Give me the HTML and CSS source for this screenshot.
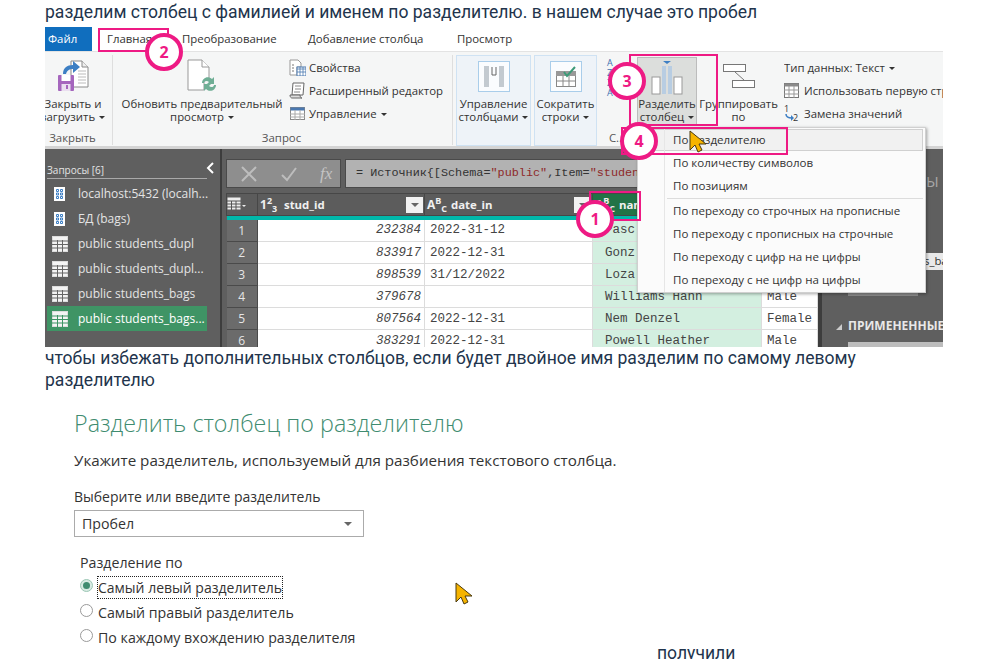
FILE: index.html
```html
<!DOCTYPE html>
<html lang="ru">
<head>
<meta charset="utf-8">
<meta name="viewport" content="width=device-width, initial-scale=1">
<title>Разделить столбец</title>
<link rel="stylesheet" href="styles.css">
</head>
<body>
<div class="page">

<p class="line first">разделим столбец с фамилией и именем по разделителю. в нашем случае это пробел</p>

<div class="shot">
  <div class="tabs">
    <div class="tab-file">Файл</div>
    <div class="tab t1">Главная</div>
    <div class="tab t2">Преобразование</div>
    <div class="tab t3">Добавление столбца</div>
    <div class="tab t4">Просмотр</div>
  </div>

  <div class="ribbon">
    <div class="group g-close">
      <div class="g-body">
        <div class="big">
          <div class="ico">
            <svg width="31" height="32" viewBox="0 0 31 32"><path d="M13 1h11l6 6v20H13z" fill="#fff" stroke="#8a8a8a"/><path d="M24 1v6h6" fill="#eee" stroke="#8a8a8a"/><path d="M20 11h8M20 14h8M20 17h8M20 20h8M20 23h8" stroke="#bbb"/><path d="M5 14c0-6 4-9 10-9V1l7 6-7 6V9c-3 0-6 1-7 5z" fill="#3d7fc4"/><rect x="0" y="15" width="16" height="16" rx="1" fill="#a566bd"/><rect x="3.500" y="15" width="9" height="6" fill="#fff"/><rect x="3.500" y="24" width="9" height="7" fill="#eadff0"/><rect x="8" y="25" width="2" height="4" fill="#a566bd"/></svg>
          </div>
          <div class="lbl">Закрыть и<br>загрузить <span class="caret"></span></div>
        </div>
      </div>
      <div class="g-label">Закрыть</div>
    </div>

    <div class="group g-query">
      <div class="g-body">
        <div class="big refresh">
          <div class="ico">
            <svg width="30" height="34" viewBox="0 0 30 34"><path d="M1 1h14l7 7v13h-5v10H1z" fill="#fff" stroke="#999"/><path d="M15 1v7h7" fill="#fff" stroke="#999"/><path d="M15 24c0-5 6-8 10-4l2-2v7h-7l2-2c-2-2-5-1-5 1zM29 26c0 5-6 8-10 4l-2 2v-7h7l-2 2c2 2 5 1 5-1z" fill="#6fae95"/></svg>
          </div>
          <div class="lbl">Обновить предварительный<br>просмотр <span class="caret"></span></div>
        </div>
        <div class="small-list query-list">
          <div class="small"><svg width="17" height="17" viewBox="0 0 17 17"><path d="M1 1h8l3 3v4H8v8H1z" fill="#fff" stroke="#999"/><path d="M3 6h2M3 9h2M3 12h2" stroke="#777"/><rect x="8" y="8" width="9" height="9" fill="#fff" stroke="#4a78b0"/><path d="M8 10h9M8 13h9M11 8v9M14 8v9" stroke="#4a78b0" stroke-width=".8"/></svg><span>Свойства</span></div>
          <div class="small"><svg width="17" height="17" viewBox="0 0 17 17"><path d="M4 1h11l-1 12H3z" fill="#fff" stroke="#666"/><path d="M6 4h6M6 7h6M5 10h6" stroke="#888"/><path d="M1 13h10c0 2 1 3 2 3H3c-1 0-2-1-2-3z" fill="#ddd" stroke="#666"/></svg><span>Расширенный редактор</span></div>
          <div class="small"><svg width="17" height="17" viewBox="0 0 17 17"><rect x="1.500" y="2.500" width="14" height="12" fill="#fff" stroke="#888"/><rect x="1.500" y="2.500" width="14" height="3" fill="#4a78b0"/><path d="M1 9h15M1 12h15M6 5v10M11 5v10" stroke="#aaa"/></svg><span>Управление <span class="caret"></span></span></div>
        </div>
      </div>
      <div class="g-label">Запрос</div>
    </div>

    <div class="blue b1">
      <div class="ico"><div class="ico-box"><svg width="24" height="24" viewBox="0 0 24 24"><rect x="2" y="1" width="5" height="21" fill="#c3cad0"/><rect x="17" y="1" width="5" height="21" fill="#c3cad0"/><path d="M10 2v8h4V2" fill="none" stroke="#666"/></svg></div></div>
      <div class="lbl">Управление<br>столбцами <span class="caret"></span></div>
    </div>
    <div class="blue b2">
      <div class="ico"><div class="ico-box"><svg width="24" height="24" viewBox="0 0 24 24"><rect x="2.500" y="6.500" width="19" height="15" fill="#fff" stroke="#888"/><rect x="2" y="6" width="20" height="5" fill="#999"/><path d="M2 16h20M9 11v11M15 11v11" stroke="#888"/><path d="M10 7l3 4 8-9" fill="none" stroke="#3c9a78" stroke-width="2"/></svg></div></div>
      <div class="lbl">Сократить<br>строки <span class="caret"></span></div>
    </div>

    <div class="group g-sort">
      <div class="g-body"><div class="az">A<br>Z<br>Z<br>A</div></div>
      <div class="g-label">С...</div>
    </div>

    <div class="big split">
      <div class="ico">
        <svg width="32" height="34" viewBox="0 0 32 34"><path d="M12 0h8l-4 3z" fill="#3d7fc4"/><rect x="1" y="16" width="8" height="17" fill="#fff" stroke="#999"/><rect x="23" y="16" width="8" height="17" fill="#fff" stroke="#999"/><rect x="11" y="5" width="4" height="28" fill="#b8cde2"/><rect x="17" y="5" width="4" height="28" fill="#b8cde2"/></svg>
      </div>
      <div class="lbl">Разделить<br>столбец <span class="caret"></span></div>
    </div>

    <div class="big groupby">
      <div class="ico">
        <svg width="32" height="24" viewBox="0 0 32 24"><rect x=".5" y=".5" width="22" height="7" fill="#fff" stroke="#777"/><rect x="9.500" y="16.500" width="22" height="7" fill="#fff" stroke="#777"/><path d="M12 8l9 8" stroke="#777"/></svg>
      </div>
      <div class="lbl">Группировать<br>по</div>
    </div>

    <div class="small-list transform">
      <div class="small"><span>Тип данных: Текст <span class="caret"></span></span></div>
      <div class="small"><svg width="15" height="15" viewBox="0 0 15 15"><rect x=".5" y=".5" width="14" height="14" fill="#fff" stroke="#777"/><rect x=".5" y=".5" width="14" height="3" fill="#8b8b8b"/><path d="M0 7h15M0 11h15M5 3v12M10 3v12" stroke="#999"/></svg><span>Использовать первую строку</span></div>
      <div class="small"><svg width="15" height="17" viewBox="0 0 15 17"><text x="0" y="7" font-size="9" fill="#333">1</text><text x="9" y="16" font-size="9" fill="#333">2</text><path d="M2 9c0 3 2 4 6 4" fill="none" stroke="#3d7fc4" stroke-width="1.500"/><path d="M7 10l3 3-3 3z" fill="#3d7fc4"/></svg><span>Замена значений</span></div>
    </div>
  </div>

  <div class="editor">
    <div class="queries">
      <div class="q-head"><span>Запросы [6]</span><svg width="9" height="12" viewBox="0 0 9 12"><path d="M7 1L2 6l5 5" fill="none" stroke="#fff" stroke-width="2"/></svg></div>
      <div class="q-item"><svg class="q-ico" width="16" height="16" viewBox="0 0 16 16"><rect x="2" y="1" width="11" height="14" fill="#fff"/><path d="M4.500 3.500h2v2h-2zM8.500 3.500h2v2h-2zM4.500 7h2v2h-2zM8.500 7h2v2h-2zM4.500 10.500h2v2h-2zM8.500 10.500h2v2h-2z" fill="none" stroke="#3d7fc4"/></svg>localhost:5432 (localh...</div>
      <div class="q-item"><svg class="q-ico" width="16" height="16" viewBox="0 0 16 16"><rect x="2" y="1" width="11" height="14" fill="#fff"/><path d="M4.500 3.500h2v2h-2zM8.500 3.500h2v2h-2zM4.500 7h2v2h-2zM8.500 7h2v2h-2zM4.500 10.500h2v2h-2zM8.500 10.500h2v2h-2z" fill="none" stroke="#3d7fc4"/></svg>БД (bags)</div>
      <div class="q-item"><svg class="q-ico" width="16" height="16" viewBox="0 0 16 16"><rect x=".5" y=".5" width="15" height="15" fill="#f4f4f4" stroke="#ddd"/><path d="M0 5h16M0 8.500h16M0 12h16M5.500 4v12M10.500 4v12" stroke="#666"/></svg>public students_dupl</div>
      <div class="q-item"><svg class="q-ico" width="16" height="16" viewBox="0 0 16 16"><rect x=".5" y=".5" width="15" height="15" fill="#f4f4f4" stroke="#ddd"/><path d="M0 5h16M0 8.500h16M0 12h16M5.500 4v12M10.500 4v12" stroke="#666"/></svg>public students_dupl...</div>
      <div class="q-item"><svg class="q-ico" width="16" height="16" viewBox="0 0 16 16"><rect x=".5" y=".5" width="15" height="15" fill="#f4f4f4" stroke="#ddd"/><path d="M0 5h16M0 8.500h16M0 12h16M5.500 4v12M10.500 4v12" stroke="#666"/></svg>public students_bags</div>
      <div class="q-item selected"><svg class="q-ico" width="16" height="16" viewBox="0 0 16 16"><rect x=".5" y=".5" width="15" height="15" fill="#f4f4f4" stroke="#ddd"/><path d="M0 5h16M0 8.500h16M0 12h16M5.500 4v12M10.500 4v12" stroke="#3f9465"/></svg>public students_bags...</div>
    </div>

    <div class="main">
      <div class="formula">
        <div class="f-btns">
          <svg width="18" height="18" viewBox="0 0 18 18"><path d="M2 2l14 14M16 2L2 16" stroke="#bdbdbd" stroke-width="2"/></svg>
          <svg width="18" height="18" viewBox="0 0 18 18"><path d="M2 10l5 5L16 3" fill="none" stroke="#bdbdbd" stroke-width="2"/></svg>
          <span class="fx">fx</span>
        </div>
        <div class="f-text">= Источник{[Schema=<span class="str">"public"</span>,Item=<span class="str">"student</span></div>
      </div>

      <table class="grid">
        <colgroup><col class="c0"><col class="c1"><col class="c2"><col class="c3"><col class="c4"></colgroup>
        <thead>
          <tr>
            <th><svg width="19" height="13" viewBox="0 0 19 13"><rect x=".5" y=".5" width="13" height="12" fill="#eee"/><path d="M0 4h14M0 7h14M0 10h14M4.500 4v9M9 4v9" stroke="#555"/><path d="M15 8h4l-2 2z" fill="#eee"/></svg></th>
            <th><div class="h"><span class="type">1<sup>2</sup><sub>3</sub></span><span class="col">stud_id</span><span class="filter"></span></div></th>
            <th><div class="h"><span class="type">A<sup>B</sup><sub>C</sub></span><span class="col">date_in</span><span class="filter"></span></div></th>
            <th class="sel"><div class="h"><span class="type">A<sup>B</sup><sub>C</sub></span><span class="col">nam</span></div></th>
            <th></th>
          </tr>
          <tr class="teal"><th colspan="5"></th></tr>
        </thead>
        <tbody>
          <tr><td class="n">1</td><td class="id">232384</td><td>2022-31-12</td><td class="nm">Pasc</td><td></td></tr>
          <tr><td class="n">2</td><td class="id">833917</td><td>2022-12-31</td><td class="nm">Gonz</td><td></td></tr>
          <tr><td class="n">3</td><td class="id">898539</td><td>31/12/2022</td><td class="nm">Loza</td><td></td></tr>
          <tr><td class="n">4</td><td class="id">379678</td><td></td><td class="nm">Williams Hann</td><td>Male</td></tr>
          <tr><td class="n">5</td><td class="id">807564</td><td>2022-12-31</td><td class="nm">Nem Denzel</td><td>Female</td></tr>
          <tr><td class="n">6</td><td class="id">383291</td><td>2022-12-31</td><td class="nm">Powell Heather</td><td>Male</td></tr>
        </tbody>
      </table>
    </div>

    <div class="settings">
      <div class="s-title">ПАРАМЕТРЫ</div>
      <div class="s-input">public students_bags</div>
      <div class="s-link"></div>
      <div class="s-steps"><span class="tri"></span>ПРИМЕНЕННЫЕ ШАГИ</div>
      <div class="s-step"></div>
    </div>
  </div>

  <div class="menu">
    <div class="m-item active">По разделителю</div>
    <div class="m-item">По количеству символов</div>
    <div class="m-item">По позициям</div>
    <div class="m-sep"></div>
    <div class="m-item">По переходу со строчных на прописные</div>
    <div class="m-item">По переходу с прописных на строчные</div>
    <div class="m-item">По переходу с цифр на не цифры</div>
    <div class="m-item">По переходу с не цифр на цифры</div>
  </div>

  <div class="mark box-2"></div>
  <div class="mark box-3"></div>
  <div class="mark box-4"></div>
  <div class="mark box-1"></div>
  <div class="circle c-2">2</div>
  <div class="circle c-3">3</div>
  <div class="circle c-4">4</div>
  <div class="circle c-1">1</div>
  <svg class="cursor cur-menu" width="19" height="24" viewBox="0 0 19 24"><path d="M1 1v19l5-5 3 7 4-2-3-6h7z" fill="#f6b400" stroke="#4a3a10"/></svg>
</div>

<p class="line">чтобы избежать дополнительных столбцов, если будет двойное имя разделим по самому левому разделителю</p>

<div class="dialog">
  <div class="d-title">Разделить столбец по разделителю</div>
  <div class="d-sub">Укажите разделитель, используемый для разбиения текстового столбца.</div>
  <div class="d-label">Выберите или введите разделитель</div>
  <div class="d-select"><span>Пробел</span><span class="d-arrow"></span></div>
  <div class="d-group">
    <div class="d-legend">Разделение по</div>
    <div class="radio on"><span class="dot"></span><span class="focus">Самый левый разделитель</span></div>
    <div class="radio"><span class="dot"></span><span>Самый правый разделитель</span></div>
    <div class="radio"><span class="dot"></span><span>По каждому вхождению разделителя</span></div>
  </div>
  <svg class="cursor cur-dialog" width="19" height="24" viewBox="0 0 19 24"><path d="M1 1v19l5-5 3 7 4-2-3-6h7z" fill="#f6b400" stroke="#4a3a10"/></svg>
</div>

<p class="line result">получили</p>

</div>
</body>
</html>
```

FILE: styles.css
```css
html, body {
  margin: 0;
  padding: 0;
  background: #fff;
}

.page {
  height: 659px;
  overflow: hidden;
  padding-left: 45px;
  box-sizing: border-box;
  font-family: Roboto, sans-serif;
}

.line {
  margin: 0;
  width: 860px;
  font-size: 17.55px;
  line-height: 22px;
  color: #22344c;
}

.first {
  padding-top: 1px;
  margin-bottom: 4px;
}

/* screenshot of power query */
.shot {
  position: relative;
  width: 898px;
  height: 320px;
  overflow: hidden;
  font-family: "Open Sans", "Noto Sans", sans-serif;
  font-size: 11.4px;
  color: #333;
}

.tabs {
  display: flex;
  height: 25px;
  line-height: 24px;
  background: #fff;
  box-sizing: border-box;
  border-bottom: 1px solid #e3e3e3;
}

.tab-file {
  width: 47px;
  height: 24px;
  background: #106ebe;
  color: #fff;
  padding-left: 3px;
  box-sizing: border-box;
}

.t1 { margin-left: 15px; width: 75px; }
.t2 { width: 126px; }
.t3 { width: 149px; }

.ribbon {
  display: flex;
  height: 97px;
  box-sizing: border-box;
  padding-top: 3px;
  background: #f5f6f6;
  border-bottom: 3px solid #d4d4d4;
}

.group {
  display: flex;
  flex-direction: column;
  height: 90px;
}

.g-body {
  display: flex;
  height: 76px;
}

.g-label {
  height: 14px;
  line-height: 14px;
  text-align: center;
  color: #555;
}

.g-close {
  width: 68px;
  border-right: 1px solid #dedede;
  box-sizing: border-box;
}

.g-close .big { width: 56px; }
.g-close .g-label { padding-right: 12px; }

.g-query {
  width: 340px;
  border-right: 1px solid #dedede;
  box-sizing: border-box;
}

.g-query .g-label { padding-right: 2px; }

.big {
  display: flex;
  flex-direction: column;
  align-items: center;
  height: 70px;
  white-space: nowrap;
}

.ico {
  height: 42px;
  display: flex;
  align-items: center;
  justify-content: center;
  flex-shrink: 0;
}

.lbl {
  line-height: 13px;
  text-align: center;
  white-space: nowrap;
}

.refresh { width: 178px; }

.caret {
  display: inline-block;
  width: 0;
  height: 0;
  margin-left: 1px;
  vertical-align: 2px;
  border-left: 3px solid transparent;
  border-right: 3px solid transparent;
  border-top: 3px solid #333;
}

.small-list {
  display: flex;
  flex-direction: column;
  gap: 6px;
  padding-top: 4px;
}

.query-list { margin-left: -2px; }

.small {
  display: flex;
  align-items: center;
  gap: 3px;
  height: 17px;
  white-space: nowrap;
}

.small svg { flex-shrink: 0; }

.blue {
  display: flex;
  flex-direction: column;
  align-items: center;
  height: 91px;
  margin-left: 3px;
  box-sizing: border-box;
  background: #eef3f8;
  border: 1px solid #cfe2f3;
}

.blue .ico { height: 41px; }

.b1 { width: 75px; }
.b2 { width: 63px; }

.ico-box {
  display: flex;
  align-items: center;
  justify-content: center;
  width: 32px;
  height: 31px;
  box-sizing: border-box;
  background: #fafcfe;
  border: 1px solid #a9cdea;
}

.g-sort { width: 40px; }

.az {
  margin: 3px 0 0 10px;
  font-size: 9px;
  line-height: 10px;
  color: #3d6fb0;
}

.split {
  width: 60px;
  height: 69px;
  margin-top: 2px;
  box-sizing: border-box;
  background: #dcdedc;
  border: 1px solid #bcbcbc;
}

.split .ico { height: 38px; margin-top: 1px; }

.groupby {
  width: 83px;
  height: 70px;
}

.transform {
  margin-left: 4px;
  width: 159px;
  overflow: hidden;
}

.transform .small { gap: 5px; }

/* dark editor part */
.editor {
  display: flex;
  height: 198px;
  background: #5f5f5f;
}

.queries {
  width: 177px;
  flex-shrink: 0;
  box-sizing: border-box;
  padding: 12px 0 0 2px;
  border-right: 2px solid #3d3d3d;
  color: #e4e4e4;
}

.q-head {
  display: flex;
  justify-content: space-between;
  align-items: flex-start;
  width: 160px;
  height: 18px;
  line-height: 19px;
  font-size: 10px;
  box-sizing: border-box;
  border-bottom: 1px solid #a9a9a9;
  margin-bottom: 2px;
}

.q-head svg { margin-top: 1px; transform: translateX(8px); }

.q-item {
  display: flex;
  align-items: center;
  gap: 10px;
  width: 160px;
  height: 25px;
  box-sizing: border-box;
  padding-left: 5px;
  font-size: 12px;
  white-space: nowrap;
}

.q-ico { flex-shrink: 0; }

.selected { background: #3f9465; color: #fff; }

.main {
  width: 596px;
  flex-shrink: 0;
  box-sizing: border-box;
  padding: 10px 0 0 4px;
  overflow: hidden;
}

.formula {
  display: flex;
  gap: 4px;
  height: 29px;
  margin-bottom: 5px;
}

.f-btns {
  display: flex;
  align-items: center;
  gap: 22px;
  width: 115px;
  box-sizing: border-box;
  padding-left: 13px;
  background: #8e8e8e;
  border: 1px solid #4a4a4a;
}

.fx {
  font-family: "Liberation Serif", serif;
  font-style: italic;
  font-size: 17px;
  color: #c4c4c4;
}

.f-text {
  flex: 1;
  box-sizing: border-box;
  padding-left: 10px;
  line-height: 27px;
  background: #b2b2b2;
  border: 1px solid #4a4a4a;
  font-family: "Liberation Mono", monospace;
  font-size: 11.8px;
  color: #333;
  white-space: nowrap;
  overflow: hidden;
}

.str { color: #8e2a2a; }

.grid {
  width: 591px;
  table-layout: fixed;
  border-collapse: collapse;
  font-family: "Liberation Mono", monospace;
  font-size: 12.5px;
  color: #444;
}

.c0 { width: 31px; }
.c1 { width: 167px; }
.c2 { width: 168px; }
.c3 { width: 169px; }
.c4 { width: 56px; }

.grid th {
  height: 22px;
  padding: 0;
  background: #5c5c5c;
  border: 1px solid #474747;
  color: #f0f0f0;
  font-family: "Open Sans", sans-serif;
  font-size: 11.4px;
  text-align: left;
  box-sizing: border-box;
}

.grid th.sel { background: #217346; }

.grid .teal th {
  height: 4px;
  background: #01b8aa;
  border: none;
}

.h {
  display: flex;
  align-items: center;
  height: 21px;
  padding: 0 1px 0 2px;
}

.type {
  font-size: 12px;
  width: 24px;
  flex-shrink: 0;
}

.type sup, .type sub {
  font-size: 9px;
  line-height: 0;
}

.col { flex: 1; font-weight: 700; }

.filter {
  position: relative;
  width: 17px;
  height: 16px;
  background: #f2f2f2;
}

.filter::after {
  content: "";
  position: absolute;
  left: 5px;
  top: 6px;
  border-left: 4px solid transparent;
  border-right: 4px solid transparent;
  border-top: 4px solid #666;
}

.grid td {
  height: 22px;
  padding: 0 5px;
  background: #fff;
  border-right: 1px solid #dcdcdc;
  border-bottom: 1px solid #dcdcdc;
  box-sizing: border-box;
  white-space: nowrap;
  overflow: hidden;
}

.grid td.n {
  background: #6b6b6b;
  border-color: #4a4a4a;
  text-align: center;
  font-family: "Open Sans", sans-serif;
  font-size: 12px;
  color: #e6e6e6;
}

.grid td.id {
  padding-right: 3px;
  text-align: right;
  font-style: italic;
}

.grid td.nm {
  padding-left: 12px;
  background: #d3efe0;
}

.settings {
  flex: 1;
  min-width: 0;
  box-sizing: border-box;
  padding-left: 26px;
  border-left: 4px solid #3d3d3d;
  color: #ddd;
  white-space: nowrap;
  overflow: hidden;
}

.s-title {
  margin-top: 22px;
  font-size: 15px;
  line-height: 20px;
  color: #a8a8a8;
}

.s-input {
  margin-top: 62px;
  height: 17px;
  line-height: 16px;
  background: #e9e9e9;
  color: #333;
}

.s-link {
  width: 70px;
  height: 3px;
  margin-top: 23px;
  background: #8a8a8a;
}

.s-steps {
  position: relative;
  margin-top: 22px;
  font-size: 12px;
  line-height: 16px;
  font-weight: 700;
  color: #e8e8e8;
}

.tri {
  position: absolute;
  left: -12px;
  top: 6px;
  border-left: 6px solid transparent;
  border-bottom: 6px solid #ccc;
}

.s-step {
  height: 20px;
  margin-top: 8px;
  background: #bdbdbd;
}

/* split column menu */
.menu {
  position: absolute;
  left: 592px;
  top: 100px;
  width: 289px;
  height: 166px;
  box-sizing: border-box;
  padding: 1px 2px 2px;
  background: #fbfbfb;
  border: 1px solid #d0d0d0;
  box-shadow: 1px 1px 3px rgba(0, 0, 0, 0.35);
  z-index: 2;
}

.menu::before {
  content: "";
  position: absolute;
  left: 26px;
  top: 0;
  bottom: 0;
  width: 1px;
  background: #e6e6e6;
}

.m-item {
  height: 23px;
  line-height: 22px;
  padding-left: 33px;
  font-size: 11.55px;
  color: #333;
  white-space: nowrap;
}

.m-item.active {
  height: 22px;
  background: #f1f1f1;
  border: 1px solid #d0d0d0;
  box-sizing: border-box;
  line-height: 20px;
  padding-left: 32px;
  margin-bottom: 1px;
}

.m-sep {
  height: 1px;
  margin: 0 0 1px 27px;
  background: #dcdcdc;
}

/* pink marks drawn over the picture */
.mark {
  position: absolute;
  box-sizing: border-box;
  border: 2px solid #ee1a84;
  z-index: 3;
}

.box-2 { left: 53px; top: 1px; width: 71px; height: 24px; }
.box-3 { left: 584px; top: 27px; width: 89px; height: 72px; }
.box-4 { left: 576px; top: 100px; width: 167px; height: 28px; }
.box-1 { left: 544px; top: 164px; width: 52px; height: 30px; }

.circle {
  position: absolute;
  width: 38px;
  height: 38px;
  box-sizing: border-box;
  border: 4px solid #ee1a84;
  border-radius: 50%;
  background: #fff;
  color: #ee1a84;
  font-family: "Open Sans", sans-serif;
  font-size: 16px;
  font-weight: 700;
  line-height: 30px;
  text-align: center;
  z-index: 4;
}

.c-2 { left: 100px; top: 6px; }
.c-3 { left: 563px; top: 35px; }
.c-4 { left: 575px; top: 95px; }
.c-1 { left: 531px; top: 173px; }

.cursor { position: absolute; z-index: 5; }
.cur-menu { left: 644px; top: 103px; }

/* dialog screenshot */
.dialog {
  position: relative;
  width: 898px;
  height: 251px;
  box-sizing: border-box;
  padding: 18px 0 0 29px;
  font-family: "Open Sans", "Noto Sans", sans-serif;
  color: #333;
}

.d-title {
  font-size: 23.3px;
  line-height: 28px;
  font-weight: 300;
  color: #3f8c70;
}

.d-sub {
  margin-top: 13px;
  font-size: 15.2px;
  line-height: 20px;
}

.d-label {
  margin-top: 17px;
  font-size: 14px;
  line-height: 20px;
}

.d-select {
  display: flex;
  justify-content: space-between;
  align-items: center;
  width: 290px;
  height: 27px;
  margin-top: 3px;
  padding: 0 11px 0 7px;
  box-sizing: border-box;
  background: #fff;
  border: 1px solid #ababab;
  font-size: 14.2px;
}

.d-arrow {
  border-left: 4px solid transparent;
  border-right: 4px solid transparent;
  border-top: 4px solid #666;
}

.d-group {
  margin: 16px 0 0 6px;
  font-size: 14.2px;
}

.d-legend {
  line-height: 20px;
  margin-bottom: 2px;
}

.radio {
  display: flex;
  align-items: center;
  gap: 5px;
  height: 25px;
}

.dot {
  position: relative;
  width: 13px;
  height: 13px;
  margin-bottom: 4px;
  box-sizing: border-box;
  border: 1px solid #9a9a9a;
  border-radius: 50%;
  background: #fff;
}

.radio.on .dot { border-color: #9cc7b5; background: #d8ebe3; }

.radio.on .dot::after {
  content: "";
  position: absolute;
  left: 2px;
  top: 2px;
  width: 7px;
  height: 7px;
  border-radius: 50%;
  background: #3f8c70;
}

.focus {
  outline: 1px dotted #222;
  padding: 1px 0;
  font-size: 14px;
}

.cur-dialog { left: 410px; top: 191px; }

.result {
  width: auto;
  margin: 0 0 0 612px;
}
```
